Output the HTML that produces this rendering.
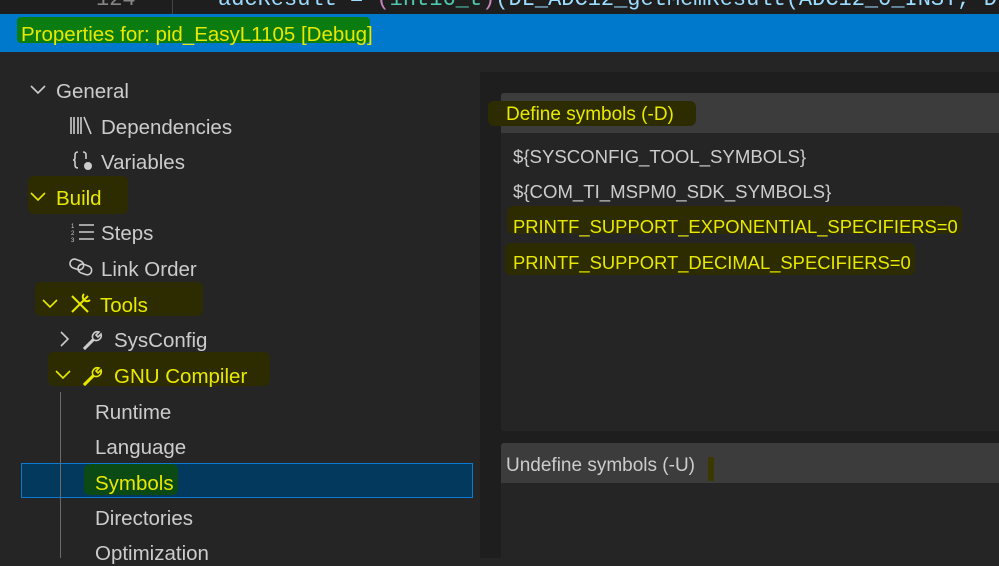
<!DOCTYPE html>
<html><head><meta charset="utf-8"><style>
body{margin:0;width:999px;height:558px;overflow:hidden;background:#252526;font-family:"Liberation Sans",sans-serif;position:relative}
.a{position:absolute}
.t{position:absolute;height:24px;line-height:24px;font-size:20.5px;color:#cccccc;white-space:nowrap;margin-top:2px}
.y{color:#e8e800}
.m{position:absolute;background:#2c2c00;border-radius:6px}
</style></head><body>
<div class="a" style="left:0;top:0;width:999px;height:14px;background:#1e1e1e;overflow:hidden">
<div class="a" style="left:172px;top:0;width:1px;height:14px;background:#444"></div>
<div class="t" style="left:96px;top:-14px;color:#858585;font-family:'Liberation Mono';font-size:22px">124</div>
<div class="t" style="left:218px;top:-14px;font-family:'Liberation Mono';font-size:22px;color:#9cdcfe">adcResult = <span style="color:#c586c0">(</span><span style="color:#4ec9b0">int16_t</span><span style="color:#c586c0">)</span>(DL_ADC12_getMemResult(ADC12_0_INST, DL_ADC12_M</div>
</div>
<div class="a" style="left:0;top:14px;width:999px;height:38px;background:#0079cc"></div>
<div class="a" style="left:17px;top:17px;width:353px;height:26px;background:#0a7c10;border-radius:4px"></div>
<div class="t y" style="left:21px;top:21px;font-size:20.5px">Properties for: pid_EasyL1105 [Debug]</div>
<div class="a" style="left:480px;top:72px;width:519px;height:486px;background:#1e1e1e"></div>
<div class="a" style="left:501px;top:93px;width:498px;height:40px;background:#3c3c3c;border-radius:3px 0 0 0"></div>
<div class="a" style="left:501px;top:133px;width:498px;height:298px;background:#252526;border-radius:0 0 0 3px"></div>
<div class="a" style="left:501px;top:443px;width:498px;height:40px;background:#3c3c3c;border-radius:3px 0 0 0"></div>
<div class="a" style="left:501px;top:483px;width:498px;height:75px;background:#252526"></div>
<div class="m" style="left:488px;top:101px;width:208px;height:25px"></div>
<div class="m" style="left:507px;top:206px;width:455px;height:28px"></div>
<div class="m" style="left:505px;top:243px;width:410px;height:32px"></div>
<div class="a" style="left:708px;top:457px;width:6px;height:24px;background:#3a3a00"></div>
<div class="t y" style="left:506px;top:101px;font-size:19px">Define symbols (-D)</div>
<div class="t" style="left:513px;top:143px;font-size:18.6px">${SYSCONFIG_TOOL_SYMBOLS}</div>
<div class="t" style="left:513px;top:178px;font-size:18.6px">${COM_TI_MSPM0_SDK_SYMBOLS}</div>
<div class="t y" style="left:513px;top:213px;font-size:18.4px">PRINTF_SUPPORT_EXPONENTIAL_SPECIFIERS=0</div>
<div class="t y" style="left:513px;top:249px;font-size:18.4px">PRINTF_SUPPORT_DECIMAL_SPECIFIERS=0</div>
<div class="t" style="left:506px;top:452px;font-size:19px">Undefine symbols (-U)</div>
<div class="m" style="left:28px;top:176px;width:100px;height:38px"></div>
<div class="m" style="left:35px;top:282px;width:168px;height:34px"></div>
<div class="m" style="left:48px;top:352px;width:222px;height:34px"></div>
<div class="a" style="left:21px;top:463px;width:450px;height:33px;background:#04395e;border:1px solid #0a7ad4"></div>
<div class="a" style="left:84px;top:464px;width:94px;height:31px;background:#0b4a14;border-radius:6px"></div>
<div class="a" style="left:60px;top:392px;width:1px;height:166px;background:#6a6a6a"></div>
<svg width="999" height="558" style="position:absolute;left:0;top:0" fill="none" stroke-width="1.6">
<path d="M31 86l7 7 7-7" stroke="#ccc"/>
<path d="M31 193l7 7 7-7" stroke="#e8e800"/>
<path d="M43 300l7 7 7-7" stroke="#e8e800"/>
<path d="M61 332l7 7-7 7" stroke="#ccc"/>
<path d="M56 371l7 7 7-7" stroke="#e8e800"/>
<path d="M71 117v17M74 117v17M78 117v17M81 117v17M84 117l7 17" stroke="#ccc"/>
<path d="M78 152q-3 0-3 3v3q0 2-2 2q2 0 2 2v3q0 3 3 3M83 152q3 0 3 3v4" stroke="#ccc"/>
<circle cx="88" cy="166" r="4" fill="#ccc"/>
<path d="M79 225h15M79 232h15M79 239h15" stroke="#ccc"/>
<text x="71" y="228" font-size="6" fill="#ccc">1</text><text x="71" y="235" font-size="6" fill="#ccc">2</text><text x="71" y="242" font-size="6" fill="#ccc">3</text>
<rect x="70" y="260" width="14" height="9" rx="4.5" transform="rotate(20 77 264)" stroke="#ccc"/>
<rect x="78" y="265" width="14" height="9" rx="4.5" transform="rotate(20 85 269)" stroke="#ccc"/>
<path d="M72 296l16 16M88 296l-16 16M84 294a4 4 0 1 0 6 6" stroke="#e8e800" stroke-width="2"/>
<path d="M84 348l9-9a5 5 0 0 1 6-7l-3 3 2 2 3-3a5 5 0 0 1-7 6l-9 9z" stroke="#ccc"/>
<path d="M84 384l9-9a5 5 0 0 1 6-7l-3 3 2 2 3-3a5 5 0 0 1-7 6l-9 9z" stroke="#e8e800"/>
</svg>
<div class="t" style="left:56px;top:78px">General</div>
<div class="t" style="left:101px;top:114px">Dependencies</div>
<div class="t" style="left:101px;top:149px">Variables</div>
<div class="t y" style="left:56px;top:185px">Build</div>
<div class="t" style="left:101px;top:220px">Steps</div>
<div class="t" style="left:101px;top:256px">Link Order</div>
<div class="t y" style="left:100px;top:292px">Tools</div>
<div class="t" style="left:114px;top:327px">SysConfig</div>
<div class="t y" style="left:114px;top:363px">GNU Compiler</div>
<div class="t" style="left:95px;top:399px">Runtime</div>
<div class="t" style="left:95px;top:434px">Language</div>
<div class="t y" style="left:95px;top:470px">Symbols</div>
<div class="t" style="left:95px;top:505px">Directories</div>
<div class="t" style="left:95px;top:540px">Optimization</div>
</body></html>
